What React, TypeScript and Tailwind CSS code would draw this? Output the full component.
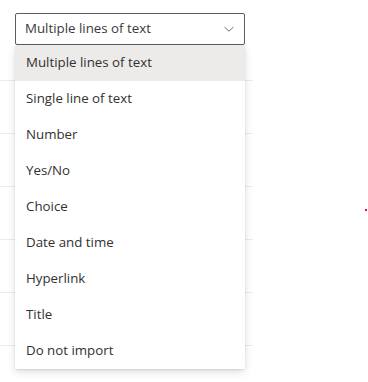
import React from "react";

const options = [
  "Multiple lines of text",
  "Single line of text",
  "Number",
  "Yes/No",
  "Choice",
  "Date and time",
  "Hyperlink",
  "Title",
  "Do not import",
];

const App: React.FC = () => {
  const selected = options[0];

  return (
    <div
      className="relative w-[368px] h-[382px] bg-white overflow-hidden text-[13.3px] text-[#323130]"
      style={{ fontFamily: '"Segoe UI", "Open Sans", "Noto Sans", sans-serif' }}
    >
      {/* rows of the list behind the menu */}
      <div className="flex flex-col pt-[80px] w-[253px]">
        {[0, 1, 2, 3, 4, 5].map((i) => (
          <div key={i} className="h-[53px] border-t border-[#edebe9]" />
        ))}
      </div>
      <div className="absolute left-[365px] top-[209px] w-[2px] h-[2px] bg-[#e81123]" />

      <div className="absolute left-[15px] top-[13px] w-[230px]">
        <button className="flex items-center w-full h-[32px] border border-[#605e5c] rounded-[2px] bg-white pl-[9px] pr-[8px] text-left">
          <span className="flex-1 text-[#3b3a39]">{selected}</span>
          <svg width="12" height="12" viewBox="0 0 12 12" className="mr-[1px]">
            <path d="M1.5 4 L6 8.2 L10.5 4" fill="none" stroke="#605e5c" strokeWidth="0.9" />
          </svg>
        </button>
        <div className="bg-white rounded-[2px] shadow-[0_3px_8px_rgba(0,0,0,0.13),0_1px_2px_rgba(0,0,0,0.1)]">
          {options.map((opt) => (
            <div
              key={opt}
              className={
                "flex items-center h-[36px] px-[11px] " +
                (opt === selected ? "bg-[#edebe9]" : "bg-white")
              }
            >
              {opt}
            </div>
          ))}
        </div>
      </div>
    </div>
  );
};

export default App;
